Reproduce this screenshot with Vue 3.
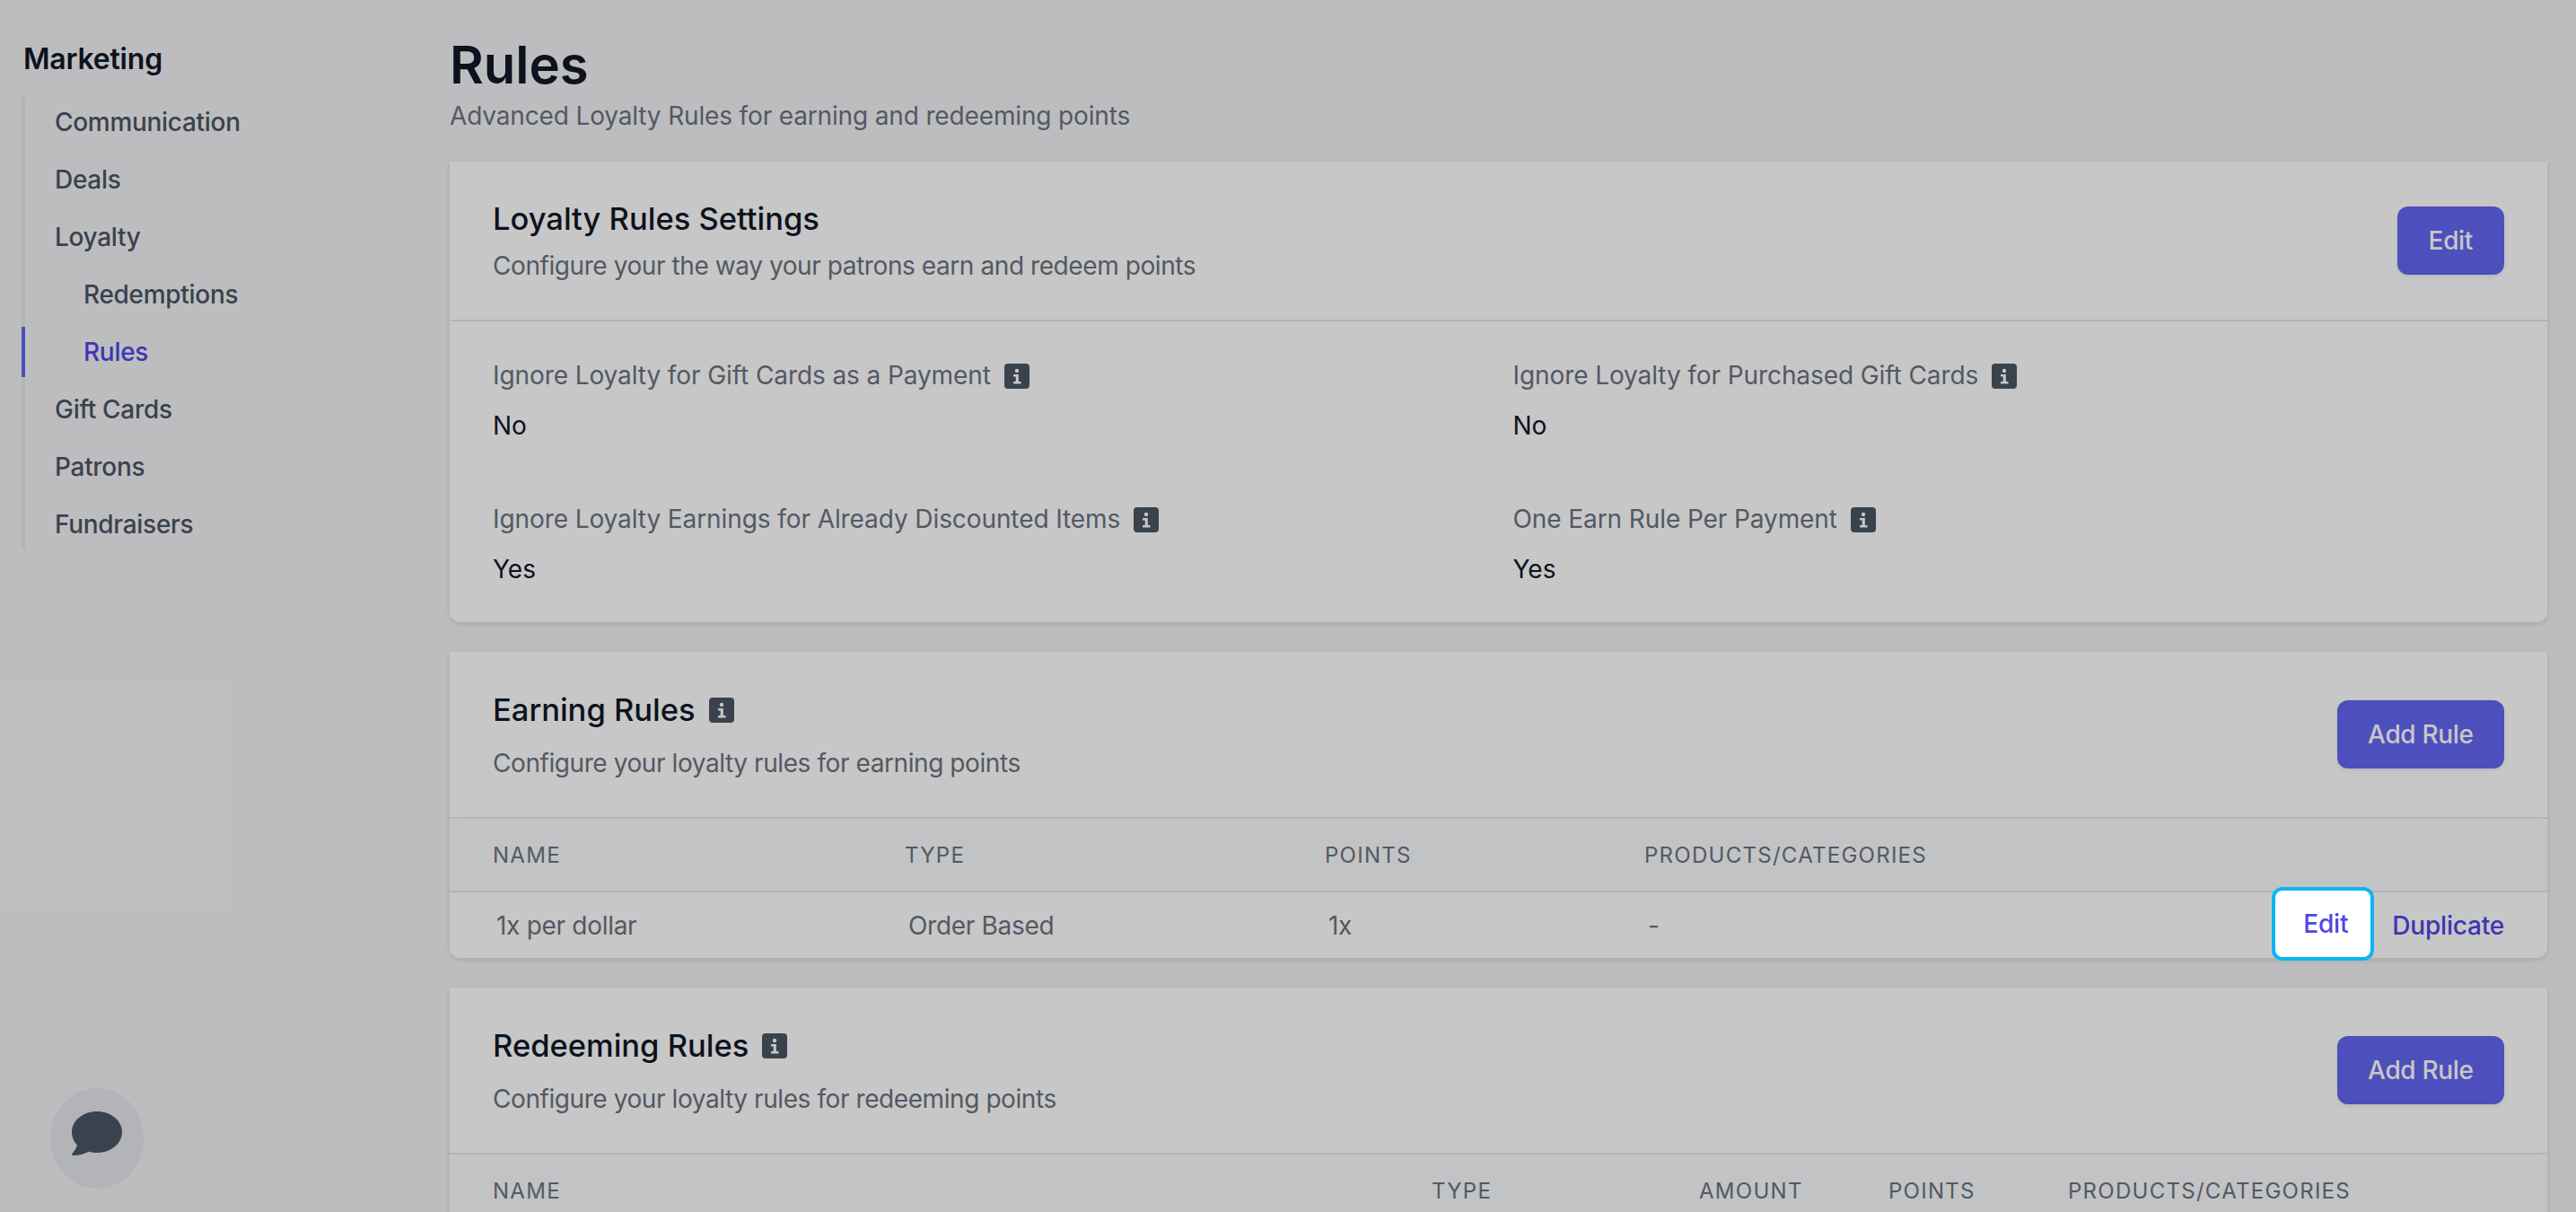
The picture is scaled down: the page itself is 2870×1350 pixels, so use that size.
<script setup>
const navItems = [
  { label: 'Communication' },
  { label: 'Deals' },
  { label: 'Loyalty' },
  { label: 'Redemptions', sub: true },
  { label: 'Rules', sub: true, active: true },
  { label: 'Gift Cards' },
  { label: 'Patrons' },
  { label: 'Fundraisers' }
]

const settings = [
  { label: 'Ignore Loyalty for Gift Cards as a Payment', value: 'No' },
  { label: 'Ignore Loyalty for Purchased Gift Cards', value: 'No' },
  { label: 'Ignore Loyalty Earnings for Already Discounted Items', value: 'Yes' },
  { label: 'One Earn Rule Per Payment', value: 'Yes' }
]

const redeemColumns = ['Type', 'Amount', 'Points', 'Products/Categories']
</script>

<template>
  <div class="page">
    <aside class="sidebar">
      <h2 class="side-title">Marketing</h2>
      <nav class="side-nav">
        <a
          v-for="item in navItems"
          :key="item.label"
          class="side-link"
          :class="{ sub: item.sub, active: item.active }"
        >{{ item.label }}</a>
      </nav>
    </aside>

    <main class="main">
      <h1 class="page-title">Rules</h1>
      <p class="page-sub">Advanced Loyalty Rules for earning and redeeming points</p>

      <section class="card">
        <header class="card-head settings-head">
          <div>
            <h3 class="card-title">Loyalty Rules Settings</h3>
            <p class="card-sub settings-sub">Configure your the way your patrons earn and redeem points</p>
          </div>
          <button class="btn">Edit</button>
        </header>
        <div class="settings">
          <div v-for="s in settings" :key="s.label" class="setting">
            <div class="setting-label">
              {{ s.label }}
              <svg class="info" viewBox="0 0 28 28"><rect width="28" height="28" rx="4" fill="#4b5563" /><circle cx="14" cy="8" r="2.2" fill="#fff" /><path d="M10 12h5.800v8H18.500v2.500H10V20h2.700v-5.500H10z" fill="#fff" /></svg>
            </div>
            <div class="setting-value">{{ s.value }}</div>
          </div>
        </div>
      </section>

      <section class="card">
        <header class="card-head rule-head">
          <div>
            <h3 class="card-title with-info">
              Earning Rules
              <svg class="info" viewBox="0 0 28 28"><rect width="28" height="28" rx="4" fill="#4b5563" /><circle cx="14" cy="8" r="2.2" fill="#fff" /><path d="M10 12h5.800v8H18.500v2.500H10V20h2.700v-5.500H10z" fill="#fff" /></svg>
            </h3>
            <p class="card-sub">Configure your loyalty rules for earning points</p>
          </div>
          <button class="btn">Add Rule</button>
        </header>
        <div class="table-head earn-cols">
          <span>Name</span><span>Type</span><span>Points</span><span>Products/Categories</span>
        </div>
        <div class="table-row earn-cols">
          <span class="cell">1x per dollar</span>
          <span class="cell">Order Based</span>
          <span class="cell">1x</span>
          <span class="cell">-</span>
          <div class="row-actions">
            <button class="link focused">Edit</button>
            <button class="link">Duplicate</button>
          </div>
        </div>
      </section>

      <section class="card">
        <header class="card-head rule-head">
          <div>
            <h3 class="card-title with-info">
              Redeeming Rules
              <svg class="info" viewBox="0 0 28 28"><rect width="28" height="28" rx="4" fill="#4b5563" /><circle cx="14" cy="8" r="2.2" fill="#fff" /><path d="M10 12h5.800v8H18.500v2.500H10V20h2.700v-5.500H10z" fill="#fff" /></svg>
            </h3>
            <p class="card-sub">Configure your loyalty rules for redeeming points</p>
          </div>
          <button class="btn">Add Rule</button>
        </header>
        <div class="table-head redeem-cols">
          <span>Name</span>
          <span v-for="c in redeemColumns" :key="c">{{ c }}</span>
        </div>
      </section>
    </main>

    <button class="chat" aria-label="Chat">
      <svg width="56" height="49" viewBox="0 0 56 49"><path d="M28 0C43.500 0 56 10.200 56 23S43.500 46 28 46c-3.200 0-6.300-.4-9-1.300C14 47.500 7 49 1.500 49c-1.200 0-1.900-1-1.200-2C2.500 44.500 5 41 6 37.500 2.200 33.600 0 28.500 0 23 0 10.200 12.500 0 28 0z" fill="#4b5563" /></svg>
    </button>

    <div class="overlay"></div>
  </div>
</template>

<style>
html, body {
  margin: 0;
  background: #f3f3f5;
}
</style>

<style scoped>
.page {
  position: relative;
  display: flex;
  width: 2870px;
  height: 1350px;
  overflow: hidden;
  background: #f3f3f5;
  font-family: Inter, "Liberation Sans", sans-serif;
  font-size: 28px;
  color: #111827;
}
.overlay {
  position: absolute;
  inset: 0;
  z-index: 10;
  background: rgba(0, 0, 0, 0.22);
}
.sidebar {
  flex: none;
  box-sizing: border-box;
  width: 501px;
  padding: 46px 0 0 24px;
}
.side-title {
  margin: 0 0 22px 2px;
  font-size: 32px;
  line-height: 40px;
  font-weight: 600;
  letter-spacing: -0.2px;
}
.side-nav {
  display: flex;
  flex-direction: column;
  gap: 8px;
  width: 440px;
  border-left: 4px solid #e5e7eb;
}
.side-link {
  margin-left: -4px;
  padding-left: 33px;
  border-left: 4px solid transparent;
  height: 56px;
  line-height: 56px;
  font-weight: 500;
  letter-spacing: -0.3px;
  color: #4b5563;
}
.side-link.sub {
  padding-left: 65px;
}
.side-link.active {
  border-left-color: #6366f1;
  color: #4f46e5;
}
.main {
  flex: 1;
  min-width: 0;
  padding: 40px 32px 0 0;
}
.page-title {
  margin: 0;
  font-size: 58px;
  line-height: 64px;
  font-weight: 600;
}
.page-sub {
  margin: 7px 0 0;
  line-height: 36px;
  letter-spacing: -0.15px;
  color: #6b7280;
}
.card {
  margin-top: 33px;
  background: #fff;
  border-radius: 0 0 12px 12px;
  box-shadow: 0 2px 6px rgba(0, 0, 0, 0.12);
}
.card-head {
  display: flex;
  justify-content: space-between;
  align-items: center;
  box-sizing: border-box;
  padding: 0 48px;
  border-bottom: 2px solid #e5e7eb;
}
.settings-head {
  height: 178px;
}
.rule-head {
  height: 186px;
}
.card-title {
  display: flex;
  align-items: center;
  gap: 15px;
  margin: 0;
  font-size: 34.5px;
  line-height: 44px;
  font-weight: 500;
}
.card-sub {
  margin: 19px 0 0;
  line-height: 36px;
  letter-spacing: -0.42px;
  color: #6b7280;
}
.settings-sub {
  margin-top: 12px;
}
.btn {
  padding: 0 34.500px;
  height: 76px;
  border: 0;
  border-radius: 12px;
  background: #6366f1;
  color: #fff;
  font: 500 28px Inter, sans-serif;
  letter-spacing: -0.35px;
  box-shadow: 0 2px 4px rgba(0, 0, 0, 0.08);
}
.settings-head .btn {
  padding: 0 35px;
}
.settings {
  display: grid;
  grid-template-columns: 1fr 1fr;
  gap: 64px 32px;
  padding: 40px 48px 39px;
}
.setting-label {
  display: flex;
  align-items: center;
  gap: 15px;
  height: 40px;
  letter-spacing: -0.09px;
  color: #6b7280;
}
.setting-label .info {
  margin-top: 2px;
}
.setting-value {
  margin-top: 16px;
  line-height: 40px;
}
.info {
  flex: none;
  width: 28px;
  height: 28px;
}
.table-head,
.table-row {
  display: grid;
  align-items: center;
  padding: 0 48px;
}
.table-head {
  box-sizing: border-box;
  height: 82px;
  border-radius: 12px 12px 0 0;
  border-bottom: 2px solid #e5e7eb;
  background: #f9fafb;
  font-size: 24px;
  letter-spacing: 1.27px;
  text-transform: uppercase;
  color: #6b7280;
}
.earn-cols {
  grid-template-columns: 459px 468px 356px 1fr auto;
}
.redeem-cols {
  grid-template-columns: 1046px 298px 211px 200px 1fr;
}
.table-row {
  height: 73px;
}
.cell {
  padding-left: 4px;
  letter-spacing: -0.3px;
  color: #6b7280;
}
.row-actions {
  position: relative;
  display: flex;
  align-items: center;
  gap: 20px;
}
.link {
  padding: 0;
  border: 0;
  background: none;
  font: 500 28px Inter, sans-serif;
  letter-spacing: -0.2px;
  color: #4f46e5;
}
.link.focused {
  position: relative;
  z-index: 20;
  box-sizing: border-box;
  width: 114px;
  height: 82px;
  margin: -6px 0 -3px;
  border: 4px solid #0ab6f2;
  border-radius: 12px;
  background: #fff;
  padding-left: 6px;
}
.chat {
  position: absolute;
  left: 56px;
  top: 1212px;
  display: flex;
  align-items: center;
  justify-content: center;
  width: 104px;
  height: 112px;
  padding: 0 0 12px;
  border: 0;
  border-radius: 50%;
  background: #e5e7eb;
}
</style>
